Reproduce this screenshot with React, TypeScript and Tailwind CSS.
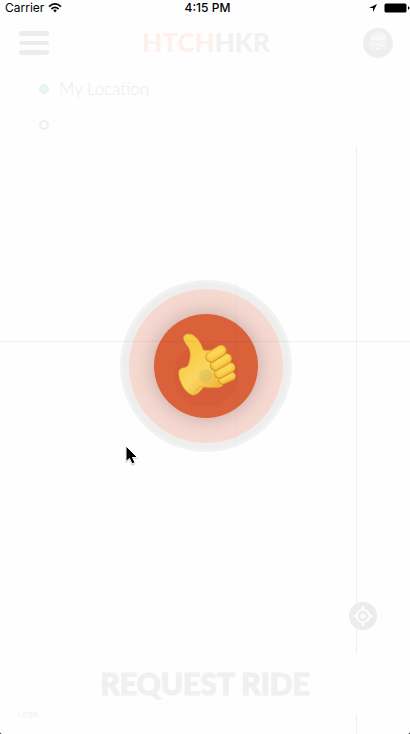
import React from "react";

function StatusBar() {
  return (
    <div className="grid h-4 grid-cols-3 items-center pr-1 pl-[5px] font-['Inter',sans-serif] text-xs leading-4 text-black">
      <div className="flex items-center gap-1">
        <span>Carrier</span>
        <svg width="14" height="10" viewBox="0 0 14 10" fill="none" stroke="currentColor" strokeWidth="1.7" aria-hidden="true">
          <path d="M1 3.6Q7 -1.7 13 3.6" />
          <path d="M3.4 6Q7 2.9 10.6 6" />
          <path d="M5.2 7.3Q7 5.9 8.8 7.3L7 9.4Z" fill="currentColor" stroke="none" />
        </svg>
      </div>
      <span className="justify-self-center pl-1 font-medium">4:15 PM</span>
      <div className="flex items-center gap-[7px] justify-self-end">
        <svg width="8" height="8" viewBox="0 0 8 8" aria-hidden="true">
          <path d="M8 0L0 4H4V8Z" fill="currentColor" />
        </svg>
        <svg className="-mr-1" width="26" height="10" viewBox="0 0 26 10" aria-hidden="true">
          <rect x="0.500" y="0.500" width="22" height="9" rx="1.500" fill="currentColor" />
          <path d="M24 3.5h1q1 1.5 0 3h-1z" fill="currentColor" />
        </svg>
      </div>
    </div>
  );
}

function Avatar() {
  return (
    <svg width="30" height="30" viewBox="0 0 30 30" aria-hidden="true">
      <circle cx="15" cy="15" r="15" fill="#eeeeee" />
      <path d="M8 9Q9 4 15 3.500Q21 3.500 23 8L23 12L24 14L22 20Q19 25 15 25Q10 24 8 20L6 13Z" fill="#f8f8f8" />
      <path d="M9 6L18 4M10 8L20 6" stroke="#f0f0f0" />
      <path d="M7 13h6v3H8zM16 13h6v3h-5zM13 14h3" fill="none" stroke="#ededed" />
      <path d="M8 19Q12 17 15 18Q18 17 22 19L19 24Q15 28 11 24Z" fill="#efefef" />
      <path d="M12 20Q15 19 18 20Q15 23 12 20Z" fill="#fafafa" />
    </svg>
  );
}

function Header() {
  return (
    <header className="mt-3 flex h-[30px] items-center justify-between pr-[17px] pl-[19px]">
      <button type="button" aria-label="Menu" className="flex w-[30px] flex-col gap-[5px]">
        <span className="h-[5px] rounded-full bg-[#ececec]" />
        <span className="h-[4px] rounded-full bg-[#ececec]" />
        <span className="h-[5px] rounded-full bg-[#ececec]" />
      </button>
      <h1 className="mb-0.5 font-['Lato',sans-serif] text-[26px] leading-[30px] font-black text-[#f1f1f1]">
        <span className="text-[#fef1ec]">HTCH</span>HKR
      </h1>
      <button type="button" aria-label="Profile">
        <Avatar />
      </button>
    </header>
  );
}

function Fields() {
  return (
    <form className="mt-[13px] mb-[3px] pr-4 pl-[39px] font-['Lato',sans-serif] text-[17px] font-light">
      <div className="flex h-9 items-center gap-[10px]">
        <label htmlFor="origin" aria-label="Pickup" className="size-[10px] rounded-full border border-[#ebf2ef] bg-[#e9f6ef]" />
        <input id="origin" defaultValue="My Location" className="min-w-0 flex-1 bg-transparent text-[#ebebeb] outline-none" />
      </div>
      <div className="flex h-9 items-center gap-[10px]">
        <label htmlFor="destination" aria-label="Destination" className="size-[10px] rounded-full border-2 border-[#eeeeee]" />
        <input id="destination" className="min-w-0 flex-1 bg-transparent text-[#ebebeb] outline-none" />
      </div>
    </form>
  );
}

const fingers = [
  { x1: 158, y1: 165, x2: 184, y2: 154, width: 28 },
  { x1: 148, y1: 146, x2: 181, y2: 128, width: 31 },
  { x1: 136, y1: 122, x2: 170, y2: 101, width: 32 },
  { x1: 123, y1: 96, x2: 153, y2: 77, width: 34 },
];

function Thumb() {
  return (
    <svg width="80" height="80" viewBox="-12 3 240 240" aria-hidden="true">
      <defs>
        <linearGradient id="palm" gradientUnits="userSpaceOnUse" x1="40" y1="100" x2="130" y2="200">
          <stop offset="0" stopColor="#f8cb45" />
          <stop offset="0.5" stopColor="#fad661" />
          <stop offset="1" stopColor="#efb53a" />
        </linearGradient>
      </defs>
      <circle cx="107" cy="152" r="97" fill="#a83b25" opacity="0.09" />
      <path
        d="M41 42C38 26 60 22 74 34C88 46 95 60 99 74Q107 78 122 76L158 150L158 182Q146 190 130 187Q112 188 101 186C92 197 80 212 68 210C46 206 22 164 27 136Q33 129 47 127Q57 122 58 110C62 96 63 80 55 66C49 57 43 52 41 42Z"
        fill="url(#palm)"
        stroke="#e5a930"
        strokeWidth="2"
      />
      <path d="M101 185Q86 181 74 205" fill="none" stroke="#dc9a26" strokeWidth="4" opacity="0.35" />
      {fingers.map((f) => (
        <g key={f.y1} strokeLinecap="round">
          <line x1={f.x1} y1={f.y1} x2={f.x2} y2={f.y2} stroke="#cf8d26" strokeWidth={f.width} />
          <line x1={f.x1} y1={f.y1 - 1} x2={f.x2} y2={f.y2 - 1} stroke="#f0b838" strokeWidth={f.width - 3} />
          <line x1={f.x1} y1={f.y1 - 2} x2={f.x2} y2={f.y2 - 2} stroke="#f8ca43" strokeWidth={f.width - 8} />
          <line x1={f.x1} y1={f.y1 - 4} x2={f.x2} y2={f.y2 - 4} stroke="#fad656" strokeWidth={f.width - 18} />
        </g>
      ))}
      <circle cx="107" cy="152" r="20" fill="#bab65a" opacity="0.32" />
    </svg>
  );
}

function Pulse() {
  return (
    <div className="pointer-events-none absolute inset-0 grid place-items-center pb-0.5 pl-0.5">
      <div className="rounded-full bg-[#f1f2f2] p-[3px]">
        <div className="rounded-full bg-[#eeeeef] p-[6px]">
          <div className="rounded-full bg-[#f6dad2] p-[25px]">
            <button
              type="button"
              aria-label="Hitch a ride"
              className="pointer-events-auto grid size-[104px] place-items-center rounded-full bg-[#db613b] shadow-[0_0_20px_1px_rgba(110,75,75,0.34)]"
            >
              <Thumb />
            </button>
          </div>
        </div>
      </div>
    </div>
  );
}

function Pointer() {
  return (
    <svg className="pointer-events-none absolute top-[445px] left-[124px]" width="16" height="22" viewBox="0 0 16 22" aria-hidden="true">
      <path d="M2 1V16.500L5.500 13.500L8 19.500L11 18L8.500 12.500H13.500Z" fill="#777777" stroke="#777777" opacity="0.3" transform="translate(0 1)" />
      <path d="M2 1V16.500L5.500 13.500L8 19L11 17.500L8.500 12.500H13.500Z" fill="#000000" stroke="#ffffff" />
    </svg>
  );
}

export default function App() {
  return (
    <div className="bg-black">
      <div className="relative flex min-h-screen flex-col overflow-hidden rounded-b-[2px] bg-[#fefefe]">
        <StatusBar />
        <Header />
        <Fields />
        <main className="relative flex-1">
          <div className="absolute inset-y-0 right-[53px] w-px bg-[#f0f0f0]" />
          <button type="button" aria-label="Center on my location" className="absolute right-[33px] bottom-6">
            <svg width="28" height="28" viewBox="0 0 28 28" fill="none" aria-hidden="true">
              <circle cx="14" cy="14" r="14" fill="#ececec" />
              <path d="M14 7L18.500 9.500L21 14L18.500 18.500L14 21L9.500 18.500L7 14L9.500 9.500Z" stroke="#fdfdfd" strokeWidth="2" strokeLinejoin="round" />
              <circle cx="14" cy="14" r="2.500" fill="#fdfdfd" />
              <path d="M14 4v4M14 20v4M4 14h4M20 14h4" stroke="#fdfdfd" strokeWidth="2" />
            </svg>
          </button>
        </main>
        <button
          type="button"
          className="h-[60px] w-full pb-0.5 font-['Lato',sans-serif] text-[30px] font-black text-[#f0f0f0] [-webkit-text-stroke:1px_#f0f0f0]"
        >
          REQUEST RIDE
        </button>
        <footer className="relative h-5">
          <div className="absolute inset-y-0 right-[53px] w-px bg-[#f0f0f0]" />
          <a href="#legal" className="absolute -top-1 left-[18px] font-['Inter',sans-serif] text-[8px] leading-2 text-[#f2f2f2]">
            Legal
          </a>
        </footer>
        <Pulse />
        <div className="pointer-events-none absolute inset-x-0 top-[341px] h-px bg-black/5" />
        <div className="pointer-events-none absolute top-[282px] left-[236px] h-[168px] w-px bg-black/2" />
        <Pointer />
      </div>
    </div>
  );
}
